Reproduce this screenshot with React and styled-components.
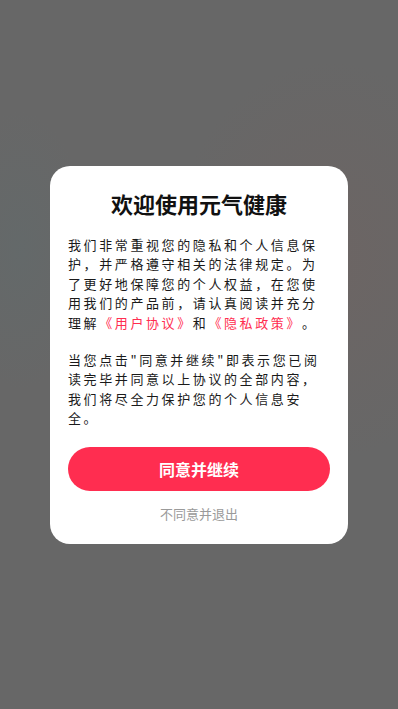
import React from "react";
import styled, { createGlobalStyle } from "styled-components";

const GlobalStyle = createGlobalStyle`
  html, body {
    margin: 0;
    padding: 0;
    height: 100%;
  }
  body {
    font-family: "Noto Sans CJK SC", "Noto Sans", sans-serif;
    background: #676767;
  }
  #root {
    height: 100%;
  }
`;

const Overlay = styled.div`
  height: 709px;
  display: flex;
  align-items: center;
  justify-content: center;
  background:
    radial-gradient(ellipse 160px 200px at 330px 260px, rgba(120, 96, 92, 0.3), rgba(103, 103, 103, 0) 100%),
    radial-gradient(ellipse 70px 140px at 20px 250px, rgba(92, 110, 112, 0.3), rgba(103, 103, 103, 0) 100%),
    #676767;
`;

const Card = styled.div`
  width: 298px;
  box-sizing: border-box;
  padding: 22px 18px 20px;
  background: #fff;
  border-radius: 20px;
  display: flex;
  flex-direction: column;
`;

const Title = styled.h1`
  margin: 0 0 17px;
  font-size: 22px;
  line-height: 30px;
  font-weight: 700;
  color: #111;
  text-align: center;
`;

const Paragraph = styled.p`
  margin: 0;
  font-size: 13px;
  line-height: 19.5px;
  letter-spacing: 2.6px;
  font-weight: 400;
  color: #1a1a1a;
  text-align: left;
  text-spacing-trim: space-all;

  & + & {
    margin-top: 17.5px;
  }
`;

const Link = styled.span`
  color: #ff2d50;
`;

const AgreeButton = styled.button`
  margin-top: 19px;
  height: 44px;
  border: none;
  border-radius: 22px;
  background: #ff2d50;
  color: #fff;
  font-family: inherit;
  font-size: 16px;
  font-weight: 700;
  cursor: pointer;
`;

const Decline = styled.button`
  margin-top: 13px;
  border: none;
  background: none;
  padding: 0;
  height: 20px;
  line-height: 20px;
  font-family: inherit;
  font-size: 13px;
  color: #9a9a9a;
  cursor: pointer;
`;

export default function App() {
  return (
    <>
      <GlobalStyle />
      <Overlay>
        <Card>
          <Title>欢迎使用元气健康</Title>
          <Paragraph>
            我们非常重视您的隐私和个人信息保护，并严格遵守相关的法律规定。为了更好地保障您的个人权益，在您使用我们的产品前，请认真阅读并充分理解
            <Link>《用户协议》</Link>和<Link>《隐私政策》</Link>。
          </Paragraph>
          <Paragraph>
            当您点击"同意并继续"即表示您已阅读完毕并同意以上协议的全部内容，我们将尽全力保护您的个人信息安全。
          </Paragraph>
          <AgreeButton>同意并继续</AgreeButton>
          <Decline>不同意并退出</Decline>
        </Card>
      </Overlay>
    </>
  );
}
